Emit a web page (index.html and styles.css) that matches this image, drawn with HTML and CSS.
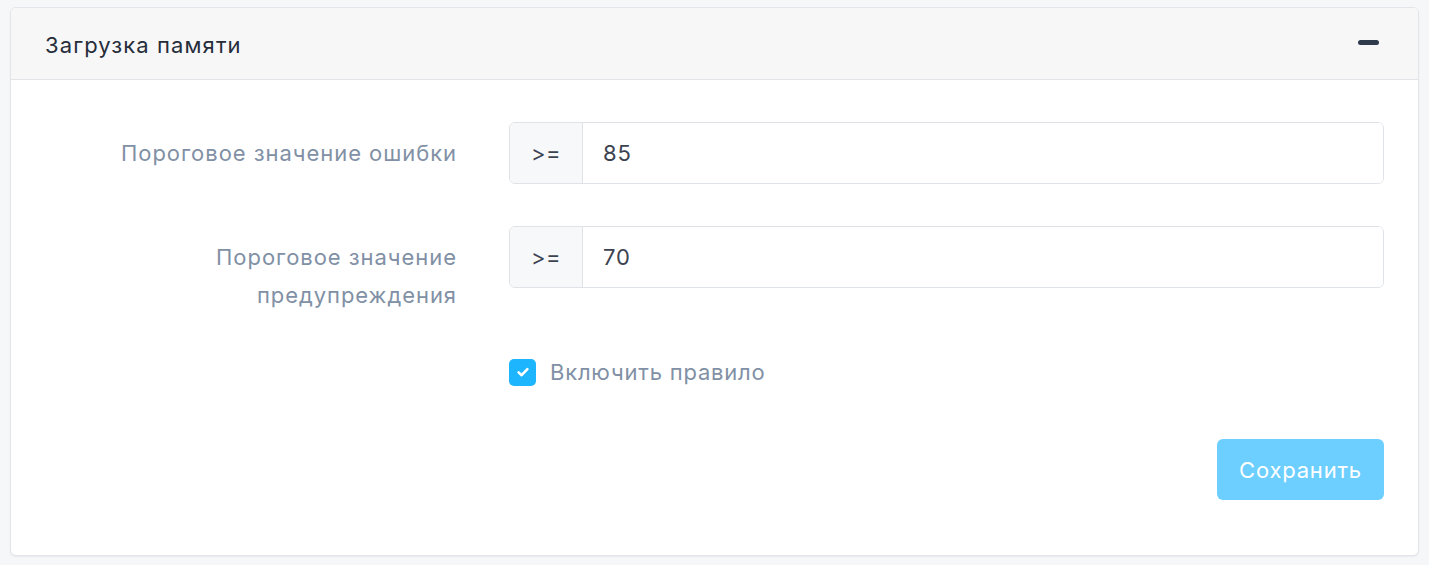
FILE: index.html
```html
<!DOCTYPE html>
<html lang="ru">
<head>
<meta charset="utf-8">
<link rel="stylesheet" href="styles.css">
</head>
<body>
<div class="card">
  <div class="card-header">
    <h3 class="card-title">Загрузка памяти</h3>
    <span class="collapse-btn" aria-label="Свернуть"></span>
  </div>
  <div class="card-body">
    <div class="form-row">
      <label class="form-label">Пороговое значение ошибки</label>
      <div class="input-group">
        <span class="addon">&gt;=</span>
        <input class="input" type="text" value="85">
      </div>
    </div>
    <div class="form-row">
      <label class="form-label">Пороговое значение предупреждения</label>
      <div class="input-group">
        <span class="addon">&gt;=</span>
        <input class="input" type="text" value="70">
      </div>
    </div>
    <div class="form-row check-row">
      <span></span>
      <label class="check">
        <span class="check-box">
          <svg viewBox="0 0 16 16" width="16" height="16"><path d="M3.6 8.4 L6.6 11.2 L12.4 5.2" fill="none" stroke="#fff" stroke-width="2.6" stroke-linecap="round" stroke-linejoin="round"/></svg>
        </span>
        <span class="check-label">Включить правило</span>
      </label>
    </div>
    <div class="actions">
      <button class="btn-save" type="button">Сохранить</button>
    </div>
  </div>
</div>
</body>
</html>
```
FILE: styles.css
```css
* { box-sizing: border-box; }
html, body { margin: 0; padding: 0; }
body {
  background: #f6f7f9;
  font-family: Inter, "Liberation Sans", sans-serif;
  padding: 7px 10px 0 10px;
  width: 1429px;
  height: 565px;
  overflow: hidden;
}
.card {
  width: 1409px;
  height: 549px;
  background: #fff;
  border: 1px solid #e2e5e9;
  border-radius: 6px;
  box-shadow: 0 1px 2px rgba(0,0,0,0.06);
  overflow: hidden;
}
.card-header {
  height: 72px;
  background: #f7f7f8;
  border-bottom: 1px solid #e2e4e8;
  display: flex;
  align-items: center;
  justify-content: space-between;
  padding: 0 39px 0 34px;
}
.card-title {
  margin: 0;
  font-size: 22px;
  letter-spacing: 1.1px;
  font-weight: 400;
  color: #262d3a;
  padding-top: 2px;
}
.collapse-btn {
  width: 21px;
  height: 5px;
  border-radius: 3px;
  background: #2f3a4d;
  margin-top: -2px;
}
.card-body {
  padding: 42px 34px 0 34px;
}
.form-row {
  display: grid;
  grid-template-columns: 412px 1fr;
  column-gap: 52px;
  margin-bottom: 42px;
}
.form-label {
  text-align: right;
  color: #8190a5;
  font-size: 22px;
  letter-spacing: 0.95px;
  line-height: 38px;
  padding-top: 12px;
}
.input-group {
  display: flex;
  height: 62px;
  border: 1px solid #dfe2e6;
  border-radius: 6px;
  overflow: hidden;
  align-self: start;
}
.addon {
  width: 73px;
  background: #f7f8fa;
  border-right: 1px solid #dfe2e6;
  display: flex;
  align-items: center;
  justify-content: center;
  color: #3c4350;
  font-size: 22px;
  letter-spacing: 0.5px;
}
.input {
  flex: 1;
  border: 0;
  outline: 0;
  padding: 0 20px;
  font-family: inherit;
  font-size: 22px;
  letter-spacing: 0.8px;
  color: #3c4350;
  background: #fff;
}
.check-row {
  padding-top: 2px;
  margin-bottom: 0;
}
.check {
  display: flex;
  align-items: center;
  gap: 14px;
  height: 28px;
}
.check-box {
  width: 27px;
  height: 27px;
  border-radius: 5px;
  background: #1db5fe;
  display: flex;
  align-items: center;
  justify-content: center;
}
.check-label {
  color: #8190a5;
  font-size: 22px;
  letter-spacing: 0.8px;
}
.actions {
  display: flex;
  justify-content: flex-end;
  margin-top: 53px;
}
.btn-save {
  width: 167px;
  height: 61px;
  border: 0;
  border-radius: 6px;
  background: #6dcfff;
  color: #fff;
  font-family: inherit;
  font-size: 22px;
  letter-spacing: 0.8px;
  cursor: pointer;
}
```
